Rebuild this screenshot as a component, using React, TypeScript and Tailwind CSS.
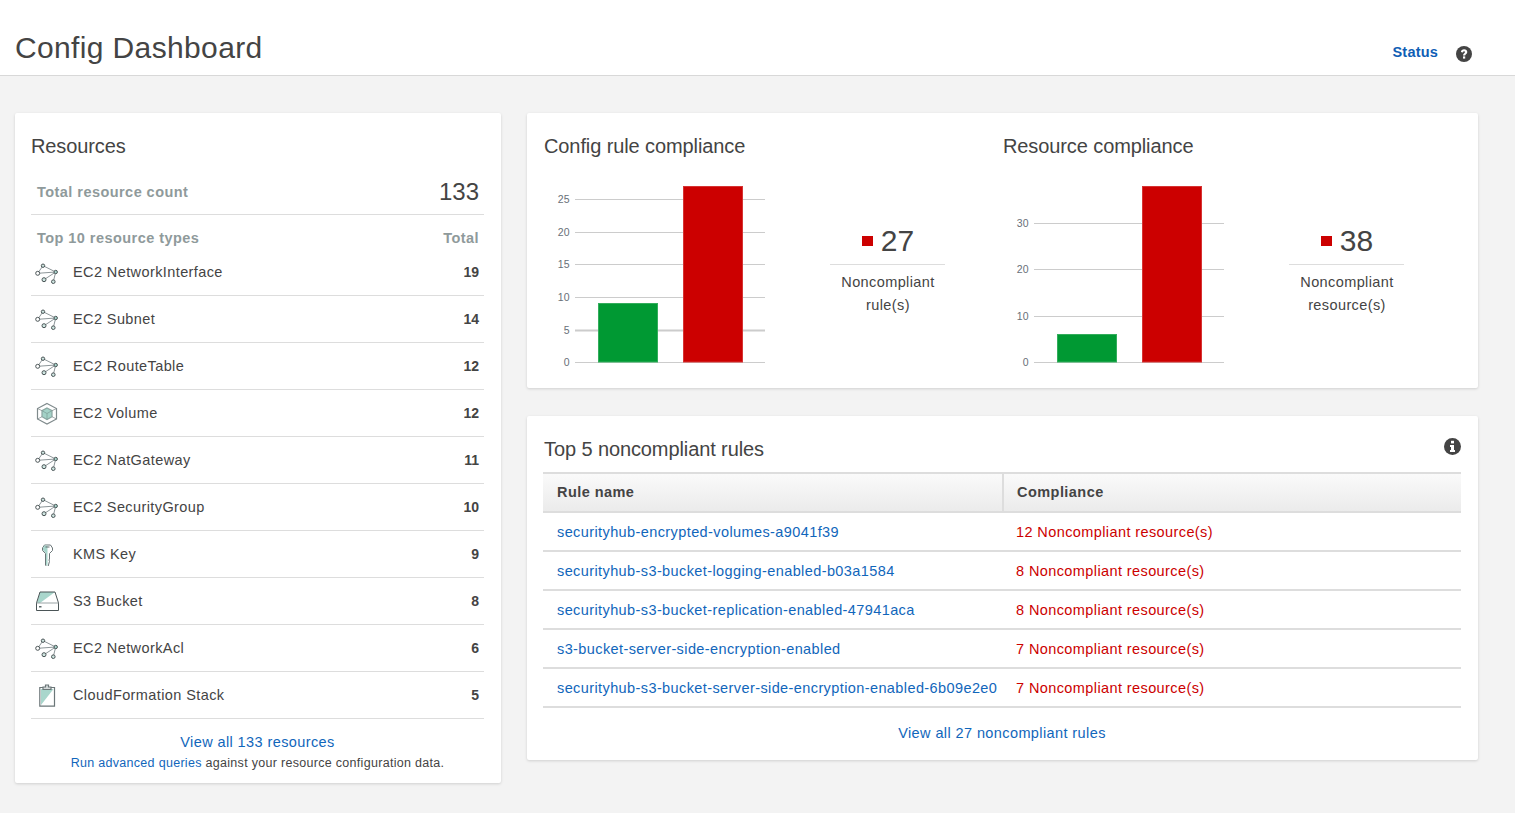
const resources = [
  { name: "EC2 NetworkInterface", count: 19, icon: "network" },
  { name: "EC2 Subnet", count: 14, icon: "network" },
  { name: "EC2 RouteTable", count: 12, icon: "network" },
  { name: "EC2 Volume", count: 12, icon: "volume" },
  { name: "EC2 NatGateway", count: 11, icon: "network" },
  { name: "EC2 SecurityGroup", count: 10, icon: "network" },
  { name: "KMS Key", count: 9, icon: "key" },
  { name: "S3 Bucket", count: 8, icon: "bucket" },
  { name: "EC2 NetworkAcl", count: 6, icon: "network" },
  { name: "CloudFormation Stack", count: 5, icon: "stack" },
];

const rules = [
  { name: "securityhub-encrypted-volumes-a9041f39", count: 12 },
  { name: "securityhub-s3-bucket-logging-enabled-b03a1584", count: 8 },
  { name: "securityhub-s3-bucket-replication-enabled-47941aca", count: 8 },
  { name: "s3-bucket-server-side-encryption-enabled", count: 7 },
  { name: "securityhub-s3-bucket-server-side-encryption-enabled-6b09e2e0", count: 7 },
];

function ResourceIcon({ type }: { type: string }) {
  if (type === "network") {
    return (
      <svg width="24" height="24" viewBox="0 0 24 24" fill="none" stroke="#4b5557" strokeWidth="1">
        <path d="M2.7 12.3 L8 4.7 L20.7 11 L2.7 12.3 M9 18.7 L20.7 11 L18.3 20.7" stroke="#8d9699" />
        <circle cx="8" cy="4.7" r="1.7" fill="#cfe6e1" />
        <circle cx="20.7" cy="11" r="1.7" fill="#a9d6cc" />
        <circle cx="2.7" cy="12.3" r="2" fill="#fff" />
        <circle cx="9" cy="18.7" r="2" fill="#cfe6e1" />
        <circle cx="18.3" cy="20.7" r="1.8" fill="#cfe6e1" />
      </svg>
    );
  }
  if (type === "volume") {
    return (
      <svg width="24" height="24" viewBox="0 0 24 24" fill="none" stroke="#7f8a8c" strokeWidth="1.2">
        <path d="M12 2.5 L21.5 7.5 V18 L12 23 L2.5 18 V7.5 Z" />
        <path d="M12 7 L17 9.7 V15.7 L12 18.5 L7 15.7 V9.7 Z" fill="#a3d2c7" stroke="#8aa5a0" />
        <path d="M7 9.7 L12 12.5 L17 9.7 M12 12.5 V18.5" stroke="#7fa29b" strokeWidth="0.8" />
        <path d="M2.5 7.5 L7 9.7 M21.5 7.5 L17 9.7 M2.5 18 L7 15.7 M21.5 18 L17 15.7" strokeWidth="0.7" />
      </svg>
    );
  }
  if (type === "key") {
    return (
      <svg width="24" height="24" viewBox="0 0 24 24" stroke="#6b7678" strokeWidth="1">
        <path d="M9.5 3 H15.5 L17.5 6 V8.5 L14.5 11.5 V17 L14 18 L14.5 19.5 L14 21 L13 25 H12 L10.5 23 V11.5 L7.5 8.5 V6 Z" fill="#fff" />
        <path d="M9.5 3.5 H12.5 V24 L11 22.5 V11.2 L8 8.3 V6 Z" fill="#a9d6cc" stroke="none" />
        <path d="M10.5 5 H14.5" stroke="#5f6b6d" />
      </svg>
    );
  }
  if (type === "bucket") {
    return (
      <svg width="24" height="24" viewBox="0 0 24 24" fill="none" stroke="#4b5557" strokeWidth="1">
        <path d="M5 3 H20 L23 14 H2 Z" fill="#fff" stroke="none" />
        <path d="M5 3 H20 L5 14 H2 Z" fill="#a9d6cc" stroke="none" />
        <path d="M5 3 H20 L23.5 14 V21.5 H1.5 V14 Z" />
        <path d="M1.5 14 H23.5" stroke="#9aa3a5" />
        <rect x="4" y="17" width="2.5" height="1.5" fill="#5f6b6d" stroke="none" />
      </svg>
    );
  }
  return (
    <svg width="24" height="24" viewBox="0 0 24 24" fill="none" stroke="#6b7678" strokeWidth="1.2">
      <path d="M4.8 4.5 H19.5 V23.2 H4.8 Z" fill="#fff" />
      <path d="M6 6 H18.5 L6 22 Z" fill="#a9d6cc" stroke="none" />
      <path d="M8 6.5 V4 H10.5 V2 H13.5 V4 H16 V6.5 Z" fill="#d5dbdb" />
    </svg>
  );
}

function BarChart({ ticks, greenHeight }: { ticks: { label: number; y: number; thick?: boolean }[]; greenHeight: number }) {
  return (
    <svg width="240" height="200" viewBox="0 0 240 200" className="shrink-0">
      {ticks.map((t) => (
        <g key={t.label}>
          <line x1="31" x2="221" y1={t.y + 0.5} y2={t.y + 0.5} stroke="#cccccc" strokeWidth={t.thick ? 2 : 1} />
          <text x="25.5" y={t.y + 4} textAnchor="end" fontSize="10.5" fill="#687078">
            {t.label}
          </text>
        </g>
      ))}
      <rect x="54.5" y={187.5 - greenHeight} width="59" height={greenHeight - 0.5} fill="#009933" stroke="#33ad5c" />
      <rect x="139.5" y="11.5" width="59" height="175.5" fill="#cc0000" stroke="#d63333" />
    </svg>
  );
}

function Chart({ title, value, line1, line2, ticks, greenHeight }: { title: string; value: number; line1: string; line2: string; ticks: { label: number; y: number; thick?: boolean }[]; greenHeight: number }) {
  return (
    <div className="w-[459px] shrink-0">
      <h2 className="text-[20px] leading-[24px] text-[#444444] tracking-[-0.1px]">{title}</h2>
      <div className="mt-[17px] flex">
        <BarChart ticks={ticks} greenHeight={greenHeight} />
        <div className="ml-[46px] mt-[42px] w-[115px] text-center">
          <div className="flex h-[48px] items-center justify-center border-b border-[#dddddd] pl-[1px] pt-[1px] text-[30px] leading-[36px] text-[#444444]">
            <span className="mr-[8px] h-[10px] w-[11px] bg-[#cc0000]"></span>
            {value}
          </div>
          <div className="mt-[6px] pl-[1px] text-[14.5px] leading-[23px] text-[#444444] tracking-[0.4px]">
            {line1}
            <br />
            {line2}
          </div>
        </div>
      </div>
    </div>
  );
}

export default function App() {
  return (
    <div className="h-[813px] overflow-hidden bg-[#f3f3f3] font-['Liberation_Sans',Arial,sans-serif]">
      <header className="flex h-[76px] items-start justify-between border-b border-[#d8d8d8] bg-white pl-[15px] pr-[43px]">
        <h1 className="mt-[30px] text-[30px] leading-[36px] tracking-[0.36px] text-[#444444]">Config Dashboard</h1>
        <div className="mt-[42px] flex items-center">
          <a href="#" className="text-[14.5px] font-bold leading-[18px] tracking-[0.2px] text-[#0f5eb5]">
            Status
          </a>
          <svg className="ml-[18px] mt-[4px]" width="16" height="16" viewBox="0 0 16 16">
            <circle cx="8" cy="8" r="8" fill="#444444" />
            <path d="M4.9 6 C5 4.2 6.4 3.2 8.1 3.2 C10 3.2 11.3 4.4 11.3 5.9 C11.3 7.8 9.2 8 9.2 9.6 H7 C7 7.4 9 7.2 9 6 C9 5.5 8.6 5.2 8 5.2 C7.4 5.2 7.1 5.6 7 6.4 Z" fill="#fff" />
            <rect x="7" y="10.4" width="2.2" height="2.2" fill="#fff" />
          </svg>
        </div>
      </header>

      <main className="flex items-start gap-[26px] pl-[15px] pt-[37px]">
        <section className="h-[670px] w-[486px] shrink-0 rounded-[2px] bg-white pl-[16px] pr-[17px] pt-[21px] shadow-[0_1px_3px_rgba(0,0,0,0.15)]">
          <h2 className="text-[20px] leading-[24px] text-[#444444] tracking-[-0.1px]">Resources</h2>
          <div className="mt-[13px] flex h-[44px] items-center justify-between border-b border-[#dddddd] pl-[6px] pr-[5px]">
            <span className="text-[14.5px] font-bold tracking-[0.45px] text-[#8f9a9b]">Total resource count</span>
            <span className="-mt-[2px] text-[24px] text-[#444444]">133</span>
          </div>
          <div className="mt-[15px] flex h-[18px] items-center justify-between pl-[6px] pr-[5px] text-[14.5px] font-bold tracking-[0.45px] text-[#8f9a9b]">
            <span>Top 10 resource types</span>
            <span>Total</span>
          </div>
          <ul className="mt-[2px]">
            {resources.map((r, i) => (
              <li key={i} className={`flex items-center border-b border-[#dddddd] pl-[4px] pr-[5px] ${i === 0 ? "h-[46px]" : "h-[47px]"}`}>
                <ResourceIcon type={r.icon} />
                <span className="ml-[14px] flex-1 pt-[1px] text-[14.5px] tracking-[0.4px] text-[#444444]">{r.name}</span>
                <span className="text-[14px] font-bold text-[#444444]">{r.count}</span>
              </li>
            ))}
          </ul>
          <div className="mt-[14px] text-center">
            <a href="#" className="block text-[14.5px] leading-[18px] tracking-[0.4px] text-[#1166bb]">
              View all 133 resources
            </a>
            <p className="mt-[4px] text-[12.5px] leading-[16px] tracking-[0.3px] text-[#444444]">
              <a href="#" className="text-[#1166bb]">
                Run advanced queries
              </a>{" "}
              against your resource configuration data.
            </p>
          </div>
        </section>

        <div className="flex w-[951px] shrink-0 flex-col gap-[28px]">
          <section className="flex h-[275px] rounded-[2px] bg-white pl-[17px] pt-[21px] shadow-[0_1px_3px_rgba(0,0,0,0.15)]">
            <Chart
              title="Config rule compliance"
              value={27}
              line1="Noncompliant"
              line2="rule(s)"
              greenHeight={59}
              ticks={[
                { label: 25, y: 24 },
                { label: 20, y: 57 },
                { label: 15, y: 89 },
                { label: 10, y: 122 },
                { label: 5, y: 155, thick: true },
                { label: 0, y: 187 },
              ]}
            />
            <Chart
              title="Resource compliance"
              value={38}
              line1="Noncompliant"
              line2="resource(s)"
              greenHeight={28}
              ticks={[
                { label: 30, y: 48 },
                { label: 20, y: 94 },
                { label: 10, y: 141 },
                { label: 0, y: 187 },
              ]}
            />
          </section>

          <section className="h-[344px] rounded-[2px] bg-white pl-[16px] pr-[17px] pt-[21px] shadow-[0_1px_3px_rgba(0,0,0,0.15)]">
            <div className="flex h-[35px] items-start justify-between pl-[1px]">
              <h2 className="text-[20px] leading-[24px] text-[#444444] tracking-[-0.1px]">Top 5 noncompliant rules</h2>
              <svg className="mt-[1px]" width="17" height="17" viewBox="0 0 17 17">
                <circle cx="8.5" cy="8.5" r="8.5" fill="#444444" />
                <rect x="7" y="2.8" width="3" height="2.6" fill="#fff" />
                <path d="M6 7 H10 V12 H11 V14 H6 V12 H7 V9 H6 Z" fill="#fff" />
              </svg>
            </div>
            <div className="flex h-[41px] border-y-2 border-[#dddddd] bg-gradient-to-b from-[#fafafa] to-[#ebebeb] text-[14.5px] font-bold tracking-[0.45px] text-[#444444]">
              <div className="flex w-[461px] items-center border-r-2 border-[#dddddd] pl-[14px]">Rule name</div>
              <div className="flex items-center pl-[13px]">Compliance</div>
            </div>
            {rules.map((r) => (
              <div key={r.name} className="flex h-[39px] items-center border-b-2 border-[#dddddd] pt-[3px] text-[14.5px] tracking-[0.4px]">
                <a href="#" className="w-[473px] shrink-0 whitespace-nowrap pl-[14px] text-[#1166bb]">
                  {r.name}
                </a>
                <span className="text-[#cc0000]">{r.count} Noncompliant resource(s)</span>
              </div>
            ))}
            <div className="mt-[16px] text-center text-[14.5px] leading-[18px] tracking-[0.4px]">
              <a href="#" className="text-[#1166bb]">
                View all 27 noncompliant rules
              </a>
            </div>
          </section>
        </div>
      </main>
    </div>
  );
}
